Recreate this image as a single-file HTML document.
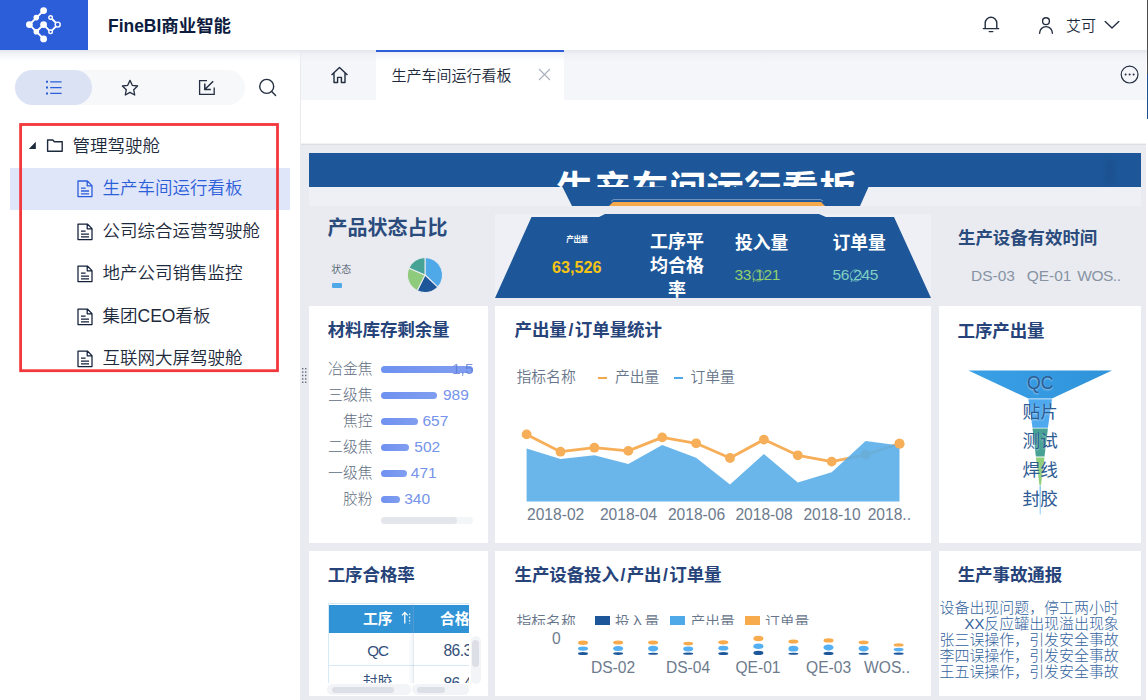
<!DOCTYPE html>
<html lang="zh-CN">
<head>
<meta charset="utf-8">
<title>FineBI商业智能</title>
<style>
*{box-sizing:border-box;margin:0;padding:0}
html,body{width:1148px;height:700px;overflow:hidden;background:#fff}
body{position:relative;font-family:"Liberation Sans","Noto Sans CJK SC",sans-serif;color:#232e40;-webkit-font-smoothing:antialiased}
.abs{position:absolute}
svg{position:absolute;overflow:visible}
.t{position:absolute;white-space:nowrap;line-height:1}
/* header */
#hdr{position:absolute;left:0;top:0;width:1148px;height:50px;background:#fff}
#logo{position:absolute;left:0;top:0;width:88px;height:50px;background:#2d5eda}
#hshadow{position:absolute;left:0;top:50px;width:1148px;height:12px;background:linear-gradient(rgba(226,229,236,.95) 0,rgba(236,238,243,.6) 35%,rgba(245,246,250,0) 100%);z-index:5;pointer-events:none}
/* sidebar */
#side{position:absolute;left:0;top:50px;width:300px;height:650px;background:#fff}
#main{z-index:auto;position:absolute;left:300px;top:50px;width:848px;height:650px;background:#fff;border-left:1px solid #e9eaee}
.tree{font-size:17.5px;color:#1d2a3c;font-weight:350}
/* dashboard */
#dash{position:absolute;left:301px;top:144px;width:845px;height:556px;background:#e9ebf0;box-shadow:inset 0 1px 0 #dcdee4}
.card{position:absolute;background:#fff;overflow:hidden}
.ct{position:absolute;font-weight:700;font-size:17.5px;color:#26437a;white-space:nowrap;line-height:1;letter-spacing:-0.1px}
.g{color:#67758a;font-weight:350}
</style>
</head>
<body>
<!-- HEADER -->
<div id="hdr">
  <div id="logo"></div>
  <div class="t" id="brand" style="left:108px;top:17.8px;font-size:17.45px;font-weight:700;color:#0d1b3e">FineBI商业智能</div>

  <!-- logo mark -->
  <svg style="left:0;top:0" width="88" height="50" viewBox="0 0 88 50">
    <g stroke="#fff" stroke-width="1.9" stroke-linecap="round" stroke-linejoin="round" fill="none">
      <path d="M43.6 10.6 L29.4 24.6 L43.6 38.9"/>
      <path d="M36.3 31.8 L43.6 24.6 L50.6 31.8 L57.7 24.6 L50.6 17.5"/>
    </g>
    <g fill="#fff">
      <circle cx="43.6" cy="10.6" r="3.4"/>
      <circle cx="36.3" cy="17.6" r="2.8"/>
      <circle cx="29.4" cy="24.6" r="3.4"/>
      <circle cx="43.6" cy="24.6" r="3.4"/>
      <circle cx="36.3" cy="31.8" r="2.8"/>
      <circle cx="43.6" cy="38.9" r="3.4"/>
    </g>
    <g fill="#2d5eda" stroke="#fff" stroke-width="1.4">
      <circle cx="50.6" cy="17.5" r="1.8"/>
      <circle cx="57.7" cy="24.6" r="2.5"/>
      <circle cx="50.6" cy="31.8" r="1.8"/>
    </g>
  </svg>
  <!-- bell -->
  <svg style="left:982px;top:15px" width="18" height="19" viewBox="0 0 18 19" fill="none" stroke="#232e40" stroke-width="1.4" stroke-linecap="round">
    <path d="M1.3 13.6 H16.7 M3.2 13.4 V8 A5.8 5.8 0 0 1 14.8 8 V13.4 M7.2 16.6 H10.8"/>
  </svg>
  <!-- user -->
  <svg style="left:1038px;top:16px" width="16" height="18" viewBox="0 0 16 18" fill="none" stroke="#232e40" stroke-width="1.4" stroke-linecap="round">
    <circle cx="8" cy="5.2" r="3.4"/>
    <path d="M1.6 17.2 A6.4 6.6 0 0 1 14.4 17.2"/>
  </svg>
  <!-- chevron -->
  <svg style="left:1104px;top:20px" width="16" height="10" viewBox="0 0 16 10" fill="none" stroke="#232e40" stroke-width="1.4" stroke-linecap="round" stroke-linejoin="round">
    <path d="M1.2 1.4 L8 8 L14.8 1.4"/>
  </svg>
  <div class="t" id="uname" style="left:1066px;top:17.7px;font-size:15px;font-weight:350;color:#1d2a3c">艾可</div>
</div>
<div id="hshadow"></div>

<!-- SIDEBAR -->
<div id="side">
  <div class="abs" style="left:15px;top:20px;width:230px;height:35px;border-radius:18px;background:#f7f8fa"></div>
  <div class="abs" style="left:15px;top:20px;width:77px;height:35px;border-radius:18px;background:#dbe2f4"></div>
  <!-- list icon -->
  <svg style="left:45px;top:30px" width="18" height="16" viewBox="0 0 18 16" fill="none" stroke="#2d5eda" stroke-width="1.3">
    <path d="M5.2 1.8 H16.6 M5.2 7.6 H16.6 M5.2 13.4 H16.6"/>
    <path d="M1 1.8 H3 M1 7.6 H3 M1 13.4 H3" stroke-width="2"/>
  </svg>
  <!-- star -->
  <svg style="left:121px;top:29px" width="18" height="18" viewBox="0 0 18 18" fill="none" stroke="#232e40" stroke-width="1.3" stroke-linejoin="round">
    <path d="M9 1.4 L11.3 6.3 L16.6 7 L12.7 10.7 L13.7 16 L9 13.4 L4.3 16 L5.3 10.7 L1.4 7 L6.7 6.3 Z"/>
  </svg>
  <!-- import -->
  <svg style="left:198px;top:29px" width="18" height="17" viewBox="0 0 18 17" fill="none" stroke="#232e40" stroke-width="1.3">
    <path d="M9 1.6 H1.6 V15.4 H16.2 V8.6"/>
    <path d="M15.2 2.2 L7 10.2 M6.8 4.4 V10.4 H12.8" stroke-width="1.5"/>
  </svg>
  <!-- search -->
  <svg style="left:258px;top:28px" width="19" height="19" viewBox="0 0 19 19" fill="none" stroke="#232e40" stroke-width="1.4" stroke-linecap="round">
    <circle cx="8.7" cy="8.4" r="7"/>
    <path d="M13.7 13.5 L17.6 17.4"/>
  </svg>

  <!-- selected row -->
  <div class="abs" style="left:10px;top:118px;width:280px;height:42px;background:#e0e6f9"></div>
  <!-- tree -->
  <svg style="left:28px;top:91px" width="10" height="9" viewBox="0 0 10 9"><path d="M7.8 0.8 V8 H0.8 Z" fill="#1d2a3c"/></svg>
  <svg style="left:46px;top:88px" width="18" height="15" viewBox="0 0 18 15" fill="none" stroke="#1d2a3c" stroke-width="1.4" stroke-linejoin="round"><path d="M1.6 2 H6.8 L8.4 3.8 H16.2 V13.2 H1.6 Z"/></svg>
  <div class="t tree" style="left:72.5px;top:88.3px">管理驾驶舱</div>

  <svg class="doc" style="left:77px;top:130px" width="16" height="18" viewBox="0 0 16 18" fill="none" stroke="#2d5eda" stroke-width="1.3" stroke-linejoin="round"><path d="M1 1 H10.4 L15 5.6 V16.6 H1 Z M10.2 1.2 V5.8 H14.8 M4 8.2 H8.6 M4 11 H12 M4 13.8 H12"/></svg>
  <div class="t tree" style="left:102.5px;top:130.4px;color:#2d5eda">生产车间运行看板</div>

  <svg class="doc" style="left:77px;top:172.5px" width="16" height="18" viewBox="0 0 16 18" fill="none" stroke="#14213a" stroke-width="1.25" stroke-linejoin="round"><path d="M1 1 H10.4 L15 5.6 V16.6 H1 Z M10.2 1.2 V5.8 H14.8 M4 8.2 H8.6 M4 11 H12 M4 13.8 H12"/></svg>
  <div class="t tree" style="left:102.5px;top:172.9px">公司综合运营驾驶舱</div>

  <svg class="doc" style="left:77px;top:215px" width="16" height="18" viewBox="0 0 16 18" fill="none" stroke="#14213a" stroke-width="1.25" stroke-linejoin="round"><path d="M1 1 H10.4 L15 5.6 V16.6 H1 Z M10.2 1.2 V5.8 H14.8 M4 8.2 H8.6 M4 11 H12 M4 13.8 H12"/></svg>
  <div class="t tree" style="left:102.5px;top:215.4px">地产公司销售监控</div>

  <svg class="doc" style="left:77px;top:257.5px" width="16" height="18" viewBox="0 0 16 18" fill="none" stroke="#14213a" stroke-width="1.25" stroke-linejoin="round"><path d="M1 1 H10.4 L15 5.6 V16.6 H1 Z M10.2 1.2 V5.8 H14.8 M4 8.2 H8.6 M4 11 H12 M4 13.8 H12"/></svg>
  <div class="t tree" style="left:102.5px;top:257.9px">集团CEO看板</div>

  <svg class="doc" style="left:77px;top:300px" width="16" height="18" viewBox="0 0 16 18" fill="none" stroke="#14213a" stroke-width="1.25" stroke-linejoin="round"><path d="M1 1 H10.4 L15 5.6 V16.6 H1 Z M10.2 1.2 V5.8 H14.8 M4 8.2 H8.6 M4 11 H12 M4 13.8 H12"/></svg>
  <div class="t tree" style="left:102.5px;top:300.4px">互联网大屏驾驶舱</div>

  <div class="abs" style="left:0;top:321px;width:300px;height:329px;background:#fff"></div>
  <!-- red frame -->
  <svg style="left:0;top:0" width="300" height="400"><rect x="20.6" y="74.5" width="256.9" height="246.2" fill="none" stroke="#f2383c" stroke-width="2.8"/></svg>
</div>

<!-- MAIN -->
<div id="main">
  <!-- tab bar -->
  <div class="abs" style="left:0;top:0;width:845px;height:50px;background:#f5f6fa"></div>
  <div class="abs" style="left:75px;top:0;width:188px;height:50px;background:#fff"></div>
  <div class="abs" style="left:75px;top:0;width:188px;height:2px;background:#2d5eda;z-index:6"></div>
  <!-- home icon -->
  <svg style="left:28.6px;top:16px" width="19" height="18" viewBox="0 0 20 19" fill="none" stroke="#232e40" stroke-width="1.5" stroke-linejoin="round">
    <path d="M1.6 9.6 L10 1.6 L18.4 9.6 M4.2 7.6 V17.4 H8 V12 H12 V17.4 H15.8 V7.6"/>
  </svg>
  <div class="t" style="left:90.5px;top:17.8px;font-size:15px;font-weight:350;color:#1d2a3c">生产车间运行看板</div>
  <svg style="left:237px;top:18px" width="13" height="13" viewBox="0 0 13 13" fill="none" stroke="#a9b0bb" stroke-width="1.1"><path d="M1 1 L12 12 M12 1 L1 12"/></svg>
  <!-- more -->
  <svg style="left:819px;top:15px" width="20" height="20" viewBox="0 0 20 20" fill="none" stroke="#232e40" stroke-width="1.2">
    <circle cx="9.6" cy="9.6" r="8.4"/>
    <g fill="#232e40" stroke="none"><circle cx="5.6" cy="9.6" r="1"/><circle cx="9.6" cy="9.6" r="1"/><circle cx="13.6" cy="9.6" r="1"/></g>
  </svg>
  <!-- toolbar strip -->
  <div class="abs" style="left:0;top:93px;width:845px;height:1px;background:#f1f2f5"></div>
</div>
<div id="dash">
  <!-- banner -->
  <div class="abs" id="banner" style="left:8px;top:9px;width:832px;height:53px;background:#eff0f5;overflow:hidden">
    <div class="abs" style="left:0;top:0;width:832px;height:34px;background:#1d5799;overflow:hidden">
      <div class="t" id="btitle" style="left:247px;top:19px;font-size:37.3px;font-weight:700;color:#fff;letter-spacing:0.3px">生产车间运行看板</div>
      <div class="abs" style="left:796px;top:6px;width:10px;height:26px;border-radius:5px;background:#1c5292;filter:blur(1.5px)"></div>
    </div>
    <svg style="left:0;top:0" width="832" height="53" viewBox="0 0 832 53">
      <path d="M253.5 34 L263 53 L551 53 L559.5 34 Z" fill="#1d5799"/>
      <path d="M300 53 L304 49 L512 49 L516 53 Z" fill="#f6a94b"/>
      <path d="M302 48.2 L304.5 46.6 L511.5 46.6 L514 48.2" fill="none" stroke="#8fa9cb" stroke-width="0.8"/>
    </svg>
  </div>

  <!-- ROW 1 -->
  <div class="ct" style="left:26.5px;top:73.5px;font-size:20px;color:#2b4b7d;letter-spacing:0">产品状态占比</div>
  <div class="t" style="left:30.3px;top:121px;font-size:10px;font-weight:350;color:#515d6e">状态</div>
  <div class="abs" style="left:30.5px;top:139px;width:10px;height:5px;border-radius:1px;background:#4fa8e8"></div>
  <svg style="left:105.6px;top:113.2px;transform:scale(1.035)" width="36" height="36" viewBox="-18 -18 36 36">
    <g stroke="#e9ebf0" stroke-width="1" stroke-linejoin="round">
      <path d="M0 0 L0 -17 A17 17 0 0 1 12.4 11.6 Z" fill="#4fa8e8"/>
      <path d="M0 0 L12.4 11.6 A17 17 0 0 1 -7.6 15.2 Z" fill="#1d5799"/>
      <path d="M0 0 L-7.6 15.2 A17 17 0 0 1 -15.6 -6.8 Z" fill="#8fcb7d"/>
      <path d="M0 0 L-15.6 -6.8 A17 17 0 0 1 0 -17 Z" fill="#46a395"/>
    </g>
  </svg>

  <!-- KPI card -->
  <div class="abs" style="left:194px;top:70px;width:436px;height:84px;background:#eff0f5;overflow:hidden">
    <svg style="left:0;top:0" width="436" height="84" viewBox="0 0 436 84">
      <path d="M36.5 3 L104 3 L110 0 L324 0 L331 3 L399 3 L436 84 L0 84 Z" fill="#1d5799"/>
      <ellipse cx="263.4" cy="61.5" rx="5.6" ry="5.6" fill="none" stroke="#93cf6d" stroke-width="0.9" opacity=".85"/>
      <ellipse cx="360.9" cy="61.5" rx="5.6" ry="5.6" fill="none" stroke="#7fcfc2" stroke-width="0.9" opacity=".85"/>
    </svg>
    <div class="t" style="left:70px;top:22px;width:24px;text-align:center;font-size:7.6px;font-weight:700;color:#fff;letter-spacing:-0.4px">产出量</div>
    <div class="t" style="left:57px;top:45px;font-size:16.2px;font-weight:700;color:#f6c414">63,526</div>
    <div class="abs" style="left:152px;top:15.5px;width:60px;text-align:center;font-size:18px;line-height:24px;font-weight:700;color:#fff;white-space:normal;word-break:break-all">工序平均合格率</div>
    <div class="t" style="left:240px;top:20.5px;font-size:17.8px;font-weight:700;color:#fff">投入量</div>
    <div class="t" style="left:239.5px;top:53px;font-size:15.5px;color:#93cf6d;letter-spacing:-0.3px">33,121</div>
    <div class="t" style="left:337.5px;top:20.5px;font-size:17.8px;font-weight:700;color:#fff">订单量</div>
    <div class="t" style="left:337.5px;top:53px;font-size:15.5px;color:#7fcfc2;letter-spacing:-0.3px">56,245</div>
  </div>

  <!-- effective time -->
  <div class="ct" style="left:657px;top:86px;color:#2b4b7d">生产设备有效时间</div>
  <div class="t" style="left:670px;top:124px;font-size:15.5px;color:#8793a3">DS-03</div>
  <div class="t" style="left:725.7px;top:124px;font-size:15.5px;color:#8793a3">QE-01</div>
  <div class="t" style="left:776.3px;top:124px;font-size:15.5px;color:#8793a3;letter-spacing:-0.5px">WOS..</div>


  <!-- ROW 2 -->
  <div class="card" style="left:8px;top:162px;width:179px;height:237px">
    <div class="ct" style="left:18.7px;top:15.5px">材料库存剩余量</div>
    <div class="t g" style="right:115.5px;top:56.3px;font-size:14.8px;font-weight:300;color:#5d6b7e">冶金焦</div>
    <div class="abs" style="left:71.7px;top:60.0px;width:91.9px;height:7.4px;border-radius:4px;background:linear-gradient(90deg,#6f91f0,#809ef0)"></div>
    <div class="t" style="left:143.0px;top:54.8px;font-size:15.5px;color:#5b7bd6;opacity:.8">1,5</div>
    <div class="t g" style="right:115.5px;top:82.3px;font-size:14.8px;font-weight:300;color:#5d6b7e">三级焦</div>
    <div class="abs" style="left:71.7px;top:86.0px;width:56.8px;height:7.4px;border-radius:4px;background:linear-gradient(90deg,#6f91f0,#809ef0)"></div>
    <div class="t" style="left:134.0px;top:81.2px;font-size:15.5px;color:#7593ea">989</div>
    <div class="t g" style="right:115.5px;top:108.3px;font-size:14.8px;font-weight:300;color:#5d6b7e">焦控</div>
    <div class="abs" style="left:71.7px;top:112.0px;width:37.3px;height:7.4px;border-radius:4px;background:linear-gradient(90deg,#6f91f0,#809ef0)"></div>
    <div class="t" style="left:113.4px;top:107.2px;font-size:15.5px;color:#7593ea">657</div>
    <div class="t g" style="right:115.5px;top:134.3px;font-size:14.8px;font-weight:300;color:#5d6b7e">二级焦</div>
    <div class="abs" style="left:71.7px;top:138.1px;width:28.6px;height:7.4px;border-radius:4px;background:linear-gradient(90deg,#6f91f0,#809ef0)"></div>
    <div class="t" style="left:105.3px;top:133.2px;font-size:15.5px;color:#7593ea">502</div>
    <div class="t g" style="right:115.5px;top:160.3px;font-size:14.8px;font-weight:300;color:#5d6b7e">一级焦</div>
    <div class="abs" style="left:71.7px;top:164.1px;width:26.3px;height:7.4px;border-radius:4px;background:linear-gradient(90deg,#6f91f0,#809ef0)"></div>
    <div class="t" style="left:101.8px;top:159.2px;font-size:15.5px;color:#7593ea">471</div>
    <div class="t g" style="right:115.5px;top:186.3px;font-size:14.8px;font-weight:300;color:#5d6b7e">胶粉</div>
    <div class="abs" style="left:71.7px;top:190.1px;width:18.9px;height:7.4px;border-radius:4px;background:linear-gradient(90deg,#6f91f0,#809ef0)"></div>
    <div class="t" style="left:95.2px;top:185.2px;font-size:15.5px;color:#7593ea">340</div>
    <div class="abs" style="left:71.7px;top:211px;width:92px;height:6.5px;border-radius:3.5px;background:#f4f5f7"></div>
    <div class="abs" style="left:71.7px;top:211px;width:76px;height:6.5px;border-radius:3.5px;background:#e4e6eb"></div>
  </div>
  <!-- drag handle -->
  <svg style="left:-0.4px;top:223px" width="7" height="17" viewBox="0 0 7 17" fill="#5f697b"><g>
    <rect x="1" y="1" width="1.4" height="1.4"/><rect x="4" y="1" width="1.4" height="1.4"/>
    <rect x="1" y="4.4" width="1.4" height="1.4"/><rect x="4" y="4.4" width="1.4" height="1.4"/>
    <rect x="1" y="7.8" width="1.4" height="1.4"/><rect x="4" y="7.8" width="1.4" height="1.4"/>
    <rect x="1" y="11.2" width="1.4" height="1.4"/><rect x="4" y="11.2" width="1.4" height="1.4"/>
    <rect x="1" y="14.6" width="1.4" height="1.4"/><rect x="4" y="14.6" width="1.4" height="1.4"/></g>
  </svg>

  <div class="card" style="left:194px;top:162px;width:436px;height:237px">
    <div class="ct" style="left:19.5px;top:15.5px">产出量<span style="margin:0 1.7px">/</span>订单量统计</div>
    <div class="t g" style="left:21.5px;top:63.5px;font-size:14.8px">指标名称</div>
    <div class="abs" style="left:102.5px;top:70.5px;width:9.5px;height:2.6px;background:#f6a94b"></div>
    <div class="t g" style="left:120px;top:63.5px;font-size:14.8px">产出量</div>
    <div class="abs" style="left:178.5px;top:70.5px;width:9.5px;height:2.6px;background:#4fa8e8"></div>
    <div class="t g" style="left:195.5px;top:63.5px;font-size:14.8px">订单量</div>
    <svg style="left:0;top:0" width="436" height="237" viewBox="0 0 436 237">
      <polyline points="31.6,128.4 65.5,145.7 99.4,141.7 133.3,144.9 167.2,131.4 201.1,137.3 235.0,152.0 268.9,133.6 302.8,149.3 336.7,155.6 370.6,148.8 404.5,137.7" fill="none" stroke="#f7ae58" stroke-width="2.8" stroke-linejoin="round" stroke-linecap="round"/>
      <g fill="#f7ae58"><circle cx="31.6" cy="128.4" r="4.9"/><circle cx="65.5" cy="145.7" r="4.9"/><circle cx="99.4" cy="141.7" r="4.9"/><circle cx="133.3" cy="144.9" r="4.9"/><circle cx="167.2" cy="131.4" r="4.9"/><circle cx="201.1" cy="137.3" r="4.9"/><circle cx="235.0" cy="152.0" r="4.9"/><circle cx="268.9" cy="133.6" r="4.9"/><circle cx="302.8" cy="149.3" r="4.9"/><circle cx="336.7" cy="155.6" r="4.9"/><circle cx="370.6" cy="148.8" r="4.9"/><circle cx="404.5" cy="137.7" r="4.9"/></g>
      <polygon points="31.6,142.5 65.5,153.0 99.4,149.3 133.3,158.0 167.2,139.0 201.1,151.7 235.0,178.4 268.9,148.0 302.8,176.5 336.7,166.2 370.6,135.0 404.5,139.6 404.5,195.5 31.6,195.5" fill="#5aaee9" fill-opacity="0.9"/>
      <circle cx="404.5" cy="137.7" r="4.9" fill="#f7ae58"/>
      <g font-size="15.6" fill="#6d7b8d" font-family="Liberation Sans, sans-serif"><text x="32.0" y="213.5" text-anchor="start">2018-02</text><text x="133.5" y="213.5" text-anchor="middle">2018-04</text><text x="201.5" y="213.5" text-anchor="middle">2018-06</text><text x="269.0" y="213.5" text-anchor="middle">2018-08</text><text x="337.0" y="213.5" text-anchor="middle">2018-10</text><text x="416.0" y="213.5" text-anchor="end">2018..</text></g>
    </svg>
  </div>

  <div class="card" style="left:638px;top:162px;width:202px;height:237px">
    <div class="ct" style="left:18.5px;top:16.5px">工序产出量</div>
    <svg style="left:0;top:0" width="202" height="237" viewBox="0 0 202 237">
      <defs><linearGradient id="fg" x1="0" x2="1" y1="0" y2="0"><stop offset="0" stop-color="#3aa0e6"/><stop offset="1" stop-color="#2f93da"/></linearGradient></defs>
      <path d="M29.4 64.4 L173.0 64.4 L113.0 92.6 L89.4 92.6 Z" fill="url(#fg)"/><path d="M89.4 93.2 L113.0 93.2 L108.9 121.8 L93.5 121.8 Z" fill="#4fa9ee"/><path d="M93.5 122.6 L108.9 122.6 L105.5 150.6 L96.9 150.6 Z" fill="#46a194"/><path d="M96.9 151.4 L105.5 151.4 L101.9 179.4 L100.5 179.4 Z" fill="#8fcf7a"/><path d="M100.5 180.0 L101.9 180.0 L101.6 208.4 L100.8 208.4 Z" fill="#7cc4f4"/>
      <g font-size="17.6" fill="#2c5a92" font-family="Liberation Sans, Noto Sans CJK SC, sans-serif" style="text-shadow:0 1px 2px rgba(255,255,255,.5)"><text x="101.2" y="82.5" text-anchor="middle">QC</text><text x="101.2" y="112.2" text-anchor="middle">贴片</text><text x="101.2" y="140.8" text-anchor="middle">测试</text><text x="101.2" y="169.5" text-anchor="middle">焊线</text><text x="101.2" y="198.7" text-anchor="middle">封胶</text></g>
    </svg>
  </div>


  <!-- ROW 3 -->
  <div class="card" style="left:8px;top:407px;width:179px;height:145px">
    <div class="ct" style="left:18.7px;top:15.5px">工序合格率</div>
    <!-- table: abs x 328-469, y 604-683 -->
    <div class="abs" style="left:19px;top:52px;width:141px;height:80px;overflow:hidden;border-left:1px solid #d8eaf6;border-top:1px solid #d8eaf6">
      <div class="abs" style="left:0;top:0.5px;width:141px;height:28.5px;background:#3093d6"></div>
      <div class="t" style="left:34px;top:8px;font-size:14.8px;font-weight:700;color:#fff">工序</div>
      <svg style="left:72px;top:7px" width="12" height="14" viewBox="0 0 12 14" fill="none" stroke="#fff" stroke-width="1.3"><path d="M3.8 12.4 V1.6 M1 4.4 L3.8 1.4 L6.6 4.4"/><path d="M8.6 2.4 V12.6" stroke-dasharray="1.6 1.6" stroke="#d6e9f7"/></svg>
      <div class="t" style="left:111px;top:8px;font-size:14.8px;font-weight:700;color:#fff">合格率</div>
      <div class="abs" style="left:0;top:60.5px;width:141px;height:1px;background:#d8eaf6"></div>
      <div class="abs" style="left:84px;top:0;width:1px;height:80px;background:rgba(150,175,200,.28)"></div>
      <div class="abs" style="left:79px;top:0;width:5px;height:80px;background:linear-gradient(90deg,rgba(120,150,180,0),rgba(120,150,180,.10))"></div>
      <div class="t" style="left:6.5px;top:39px;width:84px;text-align:center;font-size:15.2px;color:#34507c;letter-spacing:-1.2px">QC</div>
      <div class="t" style="left:114.5px;top:39px;font-size:15.6px;color:#34507c;letter-spacing:-0.6px">86.38</div>
      <div class="t" style="left:6.5px;top:71px;width:84px;text-align:center;font-size:14.8px;color:#34507c">封胶</div>
      <div class="t" style="left:114.5px;top:71.5px;font-size:15.6px;color:#34507c;letter-spacing:-0.6px">86.41</div>
    </div>
    <!-- v scrollbar -->
    <div class="abs" style="left:161.5px;top:84.5px;width:10px;height:48px;border-radius:5px;background:#f3f4f7"></div>
    <div class="abs" style="left:163px;top:88.5px;width:7px;height:27.5px;border-radius:3.5px;background:#dcdfe5"></div>
    <!-- h scrollbars -->
    <div class="abs" style="left:18px;top:132.5px;width:84px;height:11.5px;border-radius:6px;background:#f3f4f7"></div>
    <div class="abs" style="left:23px;top:135.5px;width:62px;height:6.5px;border-radius:3.5px;background:#dcdfe5"></div>
    <div class="abs" style="left:103px;top:132.5px;width:57px;height:11.5px;border-radius:6px;background:#f3f4f7"></div>
    <div class="abs" style="left:108px;top:135.5px;width:28px;height:6.5px;border-radius:3.5px;background:#dcdfe5"></div>
  </div>

  <div class="card" style="left:194px;top:407px;width:436px;height:145px">
    <div class="ct" style="left:19.5px;top:15.5px">生产设备投入<span style="margin:0 1.5px">/</span>产出<span style="margin:0 1.5px">/</span>订单量</div>
    <!-- clipped legend -->
    <div class="abs" style="left:0;top:60px;width:436px;height:14px;overflow:hidden">
      <div class="t g" style="left:21.5px;top:3.5px;font-size:14.8px">指标名称</div>
      <div class="abs" style="left:100.3px;top:5.3px;width:14.8px;height:9px;background:#1d5799"></div>
      <div class="t g" style="left:120px;top:3.5px;font-size:14.8px">投入量</div>
      <div class="abs" style="left:174.8px;top:5.3px;width:15px;height:9px;background:#4fa8e8"></div>
      <div class="t g" style="left:195.4px;top:3.5px;font-size:14.8px">产出量</div>
      <div class="abs" style="left:250px;top:5.3px;width:14.8px;height:9px;background:#f8ab4c"></div>
      <div class="t g" style="left:270px;top:3.5px;font-size:14.8px">订单量</div>
    </div>
    <svg style="left:0;top:0" width="436" height="145" viewBox="0 0 436 145">
      <g font-size="15.6" fill="#6d7b8d" font-family="Liberation Sans, sans-serif"><text x="61.4" y="92.6" text-anchor="middle">0</text><text x="118.0" y="122.0" text-anchor="middle">DS-02</text><text x="193.0" y="122.0" text-anchor="middle">DS-04</text><text x="263.0" y="122.0" text-anchor="middle">QE-01</text><text x="333.6" y="122.0" text-anchor="middle">QE-03</text><text x="415.0" y="122.0" text-anchor="end">WOS..</text></g>
      <rect x="83.0" y="89.6" width="10" height="4.4" rx="5" ry="2.2" fill="#f8ab4c"/><rect x="83.0" y="95.4" width="10" height="4.4" rx="5" ry="2.2" fill="#54b0f2"/><rect x="83.0" y="101.0" width="10" height="3.0" rx="5" ry="1.5" fill="#1d5799"/><rect x="118.1" y="89.6" width="10" height="4.0" rx="5" ry="2.0" fill="#f8ab4c"/><rect x="118.1" y="95.0" width="10" height="5.0" rx="5" ry="2.5" fill="#54b0f2"/><rect x="118.1" y="101.2" width="10" height="2.8" rx="5" ry="1.4" fill="#1d5799"/><rect x="153.1" y="89.6" width="10" height="4.0" rx="5" ry="2.0" fill="#f8ab4c"/><rect x="153.1" y="94.8" width="10" height="5.6" rx="5" ry="2.8" fill="#54b0f2"/><rect x="153.1" y="101.8" width="10" height="2.0" rx="5" ry="1.0" fill="#1d5799"/><rect x="188.2" y="90.8" width="10" height="3.6" rx="5" ry="1.8" fill="#f8ab4c"/><rect x="188.2" y="95.6" width="10" height="4.8" rx="5" ry="2.4" fill="#54b0f2"/><rect x="188.2" y="101.6" width="10" height="2.2" rx="5" ry="1.1" fill="#1d5799"/><rect x="223.3" y="89.2" width="10" height="4.2" rx="5" ry="2.1" fill="#f8ab4c"/><rect x="223.3" y="94.8" width="10" height="4.8" rx="5" ry="2.4" fill="#54b0f2"/><rect x="223.3" y="101.0" width="10" height="3.0" rx="5" ry="1.5" fill="#1d5799"/><rect x="258.4" y="84.8" width="10" height="5.5" rx="5" ry="2.8" fill="#f8ab4c"/><rect x="258.4" y="92.5" width="10" height="5.5" rx="5" ry="2.8" fill="#54b0f2"/><rect x="258.4" y="99.8" width="10" height="4.2" rx="5" ry="2.1" fill="#1d5799"/><rect x="293.4" y="88.6" width="10" height="4.0" rx="5" ry="2.0" fill="#f8ab4c"/><rect x="293.4" y="94.8" width="10" height="5.8" rx="5" ry="2.9" fill="#54b0f2"/><rect x="293.4" y="101.8" width="10" height="2.0" rx="5" ry="1.0" fill="#1d5799"/><rect x="328.5" y="87.2" width="10" height="4.4" rx="5" ry="2.2" fill="#f8ab4c"/><rect x="328.5" y="93.4" width="10" height="6.0" rx="5" ry="3.0" fill="#54b0f2"/><rect x="328.5" y="100.8" width="10" height="3.2" rx="5" ry="1.6" fill="#1d5799"/><rect x="363.6" y="89.6" width="10" height="3.6" rx="5" ry="1.8" fill="#f8ab4c"/><rect x="363.6" y="94.8" width="10" height="5.6" rx="5" ry="2.8" fill="#54b0f2"/><rect x="363.6" y="101.8" width="10" height="2.0" rx="5" ry="1.0" fill="#1d5799"/><rect x="398.6" y="92.2" width="10" height="3.4" rx="5" ry="1.7" fill="#f8ab4c"/><rect x="398.6" y="96.8" width="10" height="3.6" rx="5" ry="1.8" fill="#54b0f2"/><rect x="398.6" y="101.6" width="10" height="2.2" rx="5" ry="1.1" fill="#1d5799"/>
    </svg>
  </div>

  <div class="card" style="left:638px;top:407px;width:202px;height:145px">
    <div class="ct" style="left:18.7px;top:15.5px">生产事故通报</div>
    <div class="abs" style="left:0;top:48.5px;width:179.8px;text-align:right;font-size:14.95px;font-weight:300;color:#33639d;white-space:nowrap"><div style="height:16.1px;line-height:16.1px">设备出现问题，停工两小时</div><div style="height:16.1px;line-height:16.1px">XX反应罐出现溢出现象</div><div style="height:16.1px;line-height:16.1px">张三误操作，引发安全事故</div><div style="height:16.1px;line-height:16.1px">李四误操作，引发安全事故</div><div style="height:16.1px;line-height:16.1px">王五误操作，引发安全事故</div></div>
  </div>

</div>

<!-- right edge strip -->
<div class="abs" style="left:1146.5px;top:0;width:1.5px;height:73.5px;background:#4d4d4d;z-index:9"></div>
<div class="abs" style="left:1146.5px;top:73.5px;width:1.5px;height:45px;background:#1d5090;z-index:9"></div>
<div class="abs" style="left:1146px;top:118.5px;width:2px;height:582px;background:#fff;z-index:9"></div>
</body>
</html>
